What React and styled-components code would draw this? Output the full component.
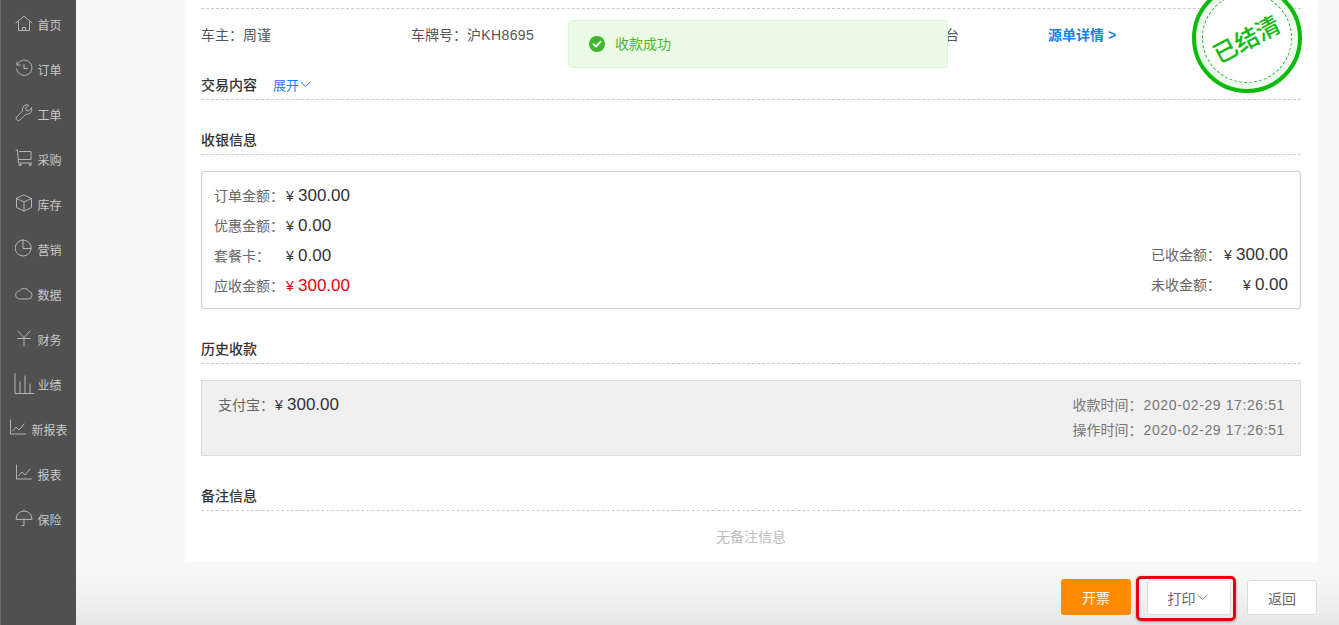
import React from 'react';
import styled, { createGlobalStyle } from 'styled-components';

const Global = createGlobalStyle`
  html, body { margin: 0; padding: 0; height: 100%; overflow: hidden; background: #f8f8f8; }
  body { font-family: "Liberation Sans", "Noto Sans CJK SC", sans-serif; color: #555; }
  * { box-sizing: border-box; }
`;
const Page = styled.div`display: flex; width: 1339px; height: 625px; overflow: hidden; position: relative;`;
const Sidebar = styled.nav`
  width: 76px; flex: none; background: #505050; border-left: 1px solid #6a6a6a; padding-top: 3px;
  display: flex; flex-direction: column;
`;
const NavItem = styled.div`
  height: 45px; display: flex; align-items: center; justify-content: center; gap: 4px;
  color: #c8c8c8; font-size: 12px;
`;
const NavIcon = styled.svg`
  width: ${p => p.$big ? 20 : 18}px; height: ${p => p.$big ? 21 : 18}px; flex: none; fill: none; stroke: #b4b4b4; stroke-width: 1;
  stroke-linecap: round; stroke-linejoin: round; margin: ${p => p.$big ? '-5px -1px 0' : '-5px 0 0'};
`;
const NavLabel = styled.span`line-height: 16px; margin-top: 1px;`;
const Main = styled.main`flex: 1; min-width: 0; display: flex; flex-direction: column;`;
const Scroll = styled.div`height: 562px; padding: 0 22px 0 109px; overflow: hidden;`;
const Card = styled.div`
  background: #fff; height: 562px; padding: 0 16px; position: relative;
  display: flex; flex-direction: column;
`;
const Head = styled.div`
  display: flex; align-items: center; gap: 16px; border-bottom: 1px dashed #cbcbcb;
  height: ${p => p.$h || 29}px; margin-top: ${p => p.$mt || 0}px; padding-bottom: 2px;
  font-size: 14px; color: #333; font-weight: 500;
`;
const Toggle = styled.span`
  display: flex; align-items: center; gap: 1px; color: #1a7fe8; font-size: 13px; font-weight: 400;
`;
const Info = styled.div`height: 62px; display: flex; align-items: flex-start; padding-top: 16px; font-size: 14px; line-height: 20px; color: #555;`;
const InfoCell = styled.div`width: ${p => p.$w || 210}px; flex: none; white-space: nowrap;`;
const Plate = styled.span`letter-spacing: .35px;`;
const TailText = styled.span`display: block; padding-left: 116px;`;
const DetailLink = styled.span`color: #1a7fe8; font-weight: 600; margin-left: 7px; white-space: nowrap;`;
const SummaryBox = styled.div`
  height: 138px; margin-top: 16px; border: 1px solid #cfcfcf; border-radius: 3px; padding: 9px 12px 7px;
  display: flex; justify-content: space-between;
`;
const Column = styled.div`
  display: flex; flex-direction: column; justify-content: flex-end; margin-bottom: ${p => p.$up || 0}px;
`;
const Row = styled.div`display: flex; align-items: center; height: 30px;`;
const Label = styled.span`
  font-size: 14px; color: #666; width: ${p => p.$w || 72}px; white-space: nowrap; margin-top: -2px;
`;
const Amount = styled.span`
  display: inline-flex; align-items: baseline; white-space: nowrap; font-size: 17px;
  color: ${p => p.$red ? '#e60012' : '#333'}; ${p => p.$w ? `width:${p.$w}px; justify-content:flex-end;` : ''}
`;
const Yen = styled.span`font-size: 14px; width: 12px; text-align: left;`;
const HistoryBox = styled.div`
  height: 76px; margin-top: 16px; background: #f0f0f0; border: 1px solid #dcdcdc;
  padding: 12px 15px 0 16px; display: flex; justify-content: space-between;
`;
const Payment = styled.div`display: flex; align-items: center; height: 24px;`;
const Times = styled.div`display: flex; flex-direction: column; font-size: 14px; color: #777; line-height: 25px;`;
const TimeRow = styled.div`display: flex; gap: 0; white-space: nowrap;`;
const TimeLabel = styled.span`width: 71px;`;
const TimeValue = styled.span`letter-spacing: .6px;`;
const Empty = styled.div`text-align: center; color: #bdbdbd; font-size: 14px; line-height: 20px; margin-top: 16px;`;
const Toast = styled.div`
  position: absolute; left: 383px; top: 20px; width: 380px; height: 48px; background: #ebf9e7;
  border: 1px solid #dff3d8; border-radius: 4px; padding-left: 20px; display: flex; align-items: center;
  gap: 10px; color: #4cb82f; font-size: 14px;
`;
const ToastIcon = styled.svg`width: 16px; height: 16px; flex: none;`;
const ToastText = styled.span`margin-top: -2px;`;
const Stamp = styled.div`
  position: absolute; left: 1007px; top: -17px; width: 110px; height: 110px; border-radius: 50%;
  border: 4px solid #0bbb0b; background: #eefaee; display: flex; align-items: center; justify-content: center;
  &::before { content: ""; position: absolute; inset: 6px; border-radius: 50%; border: 1px dashed #2bb32b; background: #fff; }
`;
const StampText = styled.span`
  color: #12b912; font-size: 24px; font-weight: 500; line-height: 1; transform: rotate(-28deg); white-space: nowrap; margin-top: 3px;
`;
const Footer = styled.footer`
  height: 63px; flex: none; background: linear-gradient(#f8f8f8, #f3f3f3 50%, #e6e6e6);
  padding: 17px 22px 0 0; display: flex; justify-content: flex-end; align-items: flex-start; gap: 16px;
`;
const OrangeBtn = styled.button`
  width: 70px; height: 36px; border: 0; border-radius: 3px; background: #ff8a00; color: #fff;
  font: 14px "Liberation Sans", "Noto Sans CJK SC", sans-serif;
`;
const GhostBtn = styled.button`
  width: ${p => p.$w}px; height: 35px; margin-top: 1px; border: 1px solid #dcdcdc; border-radius: 3px; background: #fff; color: #666;
  font: 14px "Liberation Sans", "Noto Sans CJK SC", sans-serif; padding: 0 ${p => p.$pr || 0}px 0 0;
  display: flex; align-items: center; justify-content: center; gap: 1px; position: relative;
`;
const Highlight = styled.span`
  position: absolute; left: -12px; top: -5px; width: 100px; height: 45px; border: 3px solid #e60012; border-radius: 5px;
  box-shadow: 0 1px 3px rgba(0,0,0,.35);
`;

const Chevron = ({ color = '#1a7fe8', w = 11 }) => (
  <svg width={w} height="7" viewBox="0 0 11 7" fill="none" stroke={color} strokeWidth="1"><path d="M.8 1l4.7 4.6L10.2 1" /></svg>
);

const nav = [
  ['首页', <><path d="M1 9l8-7 8 7" /><path d="M3.500 7.500V16.500h11V7.500" /><path d="M7.500 16.500v-3h3v3" /></>],
  ['订单', <><path d="M2 6a7.700 7.700 0 1 1-.4 4" /><path d="M2 3v3h3" /><path d="M9 5.500v4h3.500" /></>],
  ['工单', <><path d="M16.500 4l-3 3-2.300-.6-.6-2.300 3-3a4.600 4.600 0 0 0-6 5.800L1.600 13a2 2 0 0 0 0 2.600l.6.6a2 2 0 0 0 2.600 0l6.200-6.100a4.600 4.600 0 0 0 5.500-6.100z" /></>],
  ['采购', <><path d="M1 1h1.500l1 13h13" /><path d="M4.500 2.500h11.500v8H4" /><circle cx="5" cy="15.800" r="1" /><circle cx="15" cy="15.800" r="1" /></>],
  ['库存', <><path d="M9 1l7.500 3.500v9L9 17l-7.500-3.500v-9z" /><path d="M1.500 4.500L9 8l7.500-3.500M9 8v9" /></>],
  ['营销', <><path d="M8 1a8 8 0 1 0 8.200 8.500" /><path d="M8 1v8.500h8.200A8 8 0 0 0 8 1" /></>],
  ['数据', <><path d="M5 15a4 4 0 0 1-.6-8A5.500 5.500 0 0 1 14 7.300 3.900 3.900 0 0 1 13.500 15z" /></>],
  ['财务', <><path d="M3 2l6 7 6-7M2.500 9.500h13M9 9v8" /></>],
  ['业绩', <><path d="M1 .5v20h19" /><path d="M6 20V9M11 20V3M16 20V11" /></>, true],
  ['新报表', <><path d="M1.500 1v14h15" /><path d="M3.500 12l3.500-4 3 3 5-6" /></>],
  ['报表', <><path d="M1.500 1v14h15" /><path d="M3.500 12l3.500-4 3 3 5-6" /></>],
  ['保险', <><path d="M1 10a8 8 0 0 1 16 0z" /><path d="M9 2V1M9 10v6.500H7" /></>],
];

export default function App() {
  return (
    <Page>
      <Global />
      <Sidebar>
        {nav.map(([t, icon, big]) => (
          <NavItem key={t}>
            <NavIcon $big={big} viewBox={big ? '0 0 20 21' : '0 0 18 18'}>{icon}</NavIcon>
            <NavLabel>{t}</NavLabel>
          </NavItem>
        ))}
      </Sidebar>
      <Main>
        <Scroll>
          <Card>
            <Head $h={9} />
            <Info>
              <InfoCell>车主：周谨</InfoCell>
              <InfoCell>车牌号：<Plate>沪KH8695</Plate></InfoCell>
              <InfoCell $w={208} />
              <InfoCell $w={212}><TailText>台</TailText></InfoCell>
              <DetailLink>源单详情 &gt;</DetailLink>
            </Info>
            <Head>交易内容<Toggle>展开<Chevron /></Toggle></Head>
            <Head $mt={26}>收银信息</Head>
            <SummaryBox>
              <Column>
                <Row><Label>订单金额：</Label><Amount><Yen>¥</Yen>300.00</Amount></Row>
                <Row><Label>优惠金额：</Label><Amount><Yen>¥</Yen>0.00</Amount></Row>
                <Row><Label>套餐卡：</Label><Amount><Yen>¥</Yen>0.00</Amount></Row>
                <Row><Label>应收金额：</Label><Amount $red><Yen>¥</Yen>300.00</Amount></Row>
              </Column>
              <Column $up={1}>
                <Row><Label>已收金额：</Label><Amount $w={65}><Yen>¥</Yen>300.00</Amount></Row>
                <Row><Label>未收金额：</Label><Amount $w={65}><Yen>¥</Yen>0.00</Amount></Row>
              </Column>
            </SummaryBox>
            <Head $mt={26}>历史收款</Head>
            <HistoryBox>
              <Payment><Label $w={57}>支付宝：</Label><Amount><Yen>¥</Yen>300.00</Amount></Payment>
              <Times>
                <TimeRow><TimeLabel>收款时间：</TimeLabel><TimeValue>2020-02-29 17:26:51</TimeValue></TimeRow>
                <TimeRow><TimeLabel>操作时间：</TimeLabel><TimeValue>2020-02-29 17:26:51</TimeValue></TimeRow>
              </Times>
            </HistoryBox>
            <Head $mt={26}>备注信息</Head>
            <Empty>无备注信息</Empty>
            <Toast>
              <ToastIcon viewBox="0 0 16 16">
                <circle cx="8" cy="8" r="8" fill="#3fb82a" />
                <path d="M4.500 8.200l2.500 2.500 4.500-5" fill="none" stroke="#fff" strokeWidth="1.800" strokeLinecap="round" strokeLinejoin="round" />
              </ToastIcon>
              <ToastText>收款成功</ToastText>
            </Toast>
            <Stamp><StampText>已结清</StampText></Stamp>
          </Card>
        </Scroll>
        <Footer>
          <OrangeBtn>开票</OrangeBtn>
          <GhostBtn $w={84} $pr={3}>打印<Chevron color="#777" /><Highlight /></GhostBtn>
          <GhostBtn $w={70}>返回</GhostBtn>
        </Footer>
      </Main>
    </Page>
  );
}
